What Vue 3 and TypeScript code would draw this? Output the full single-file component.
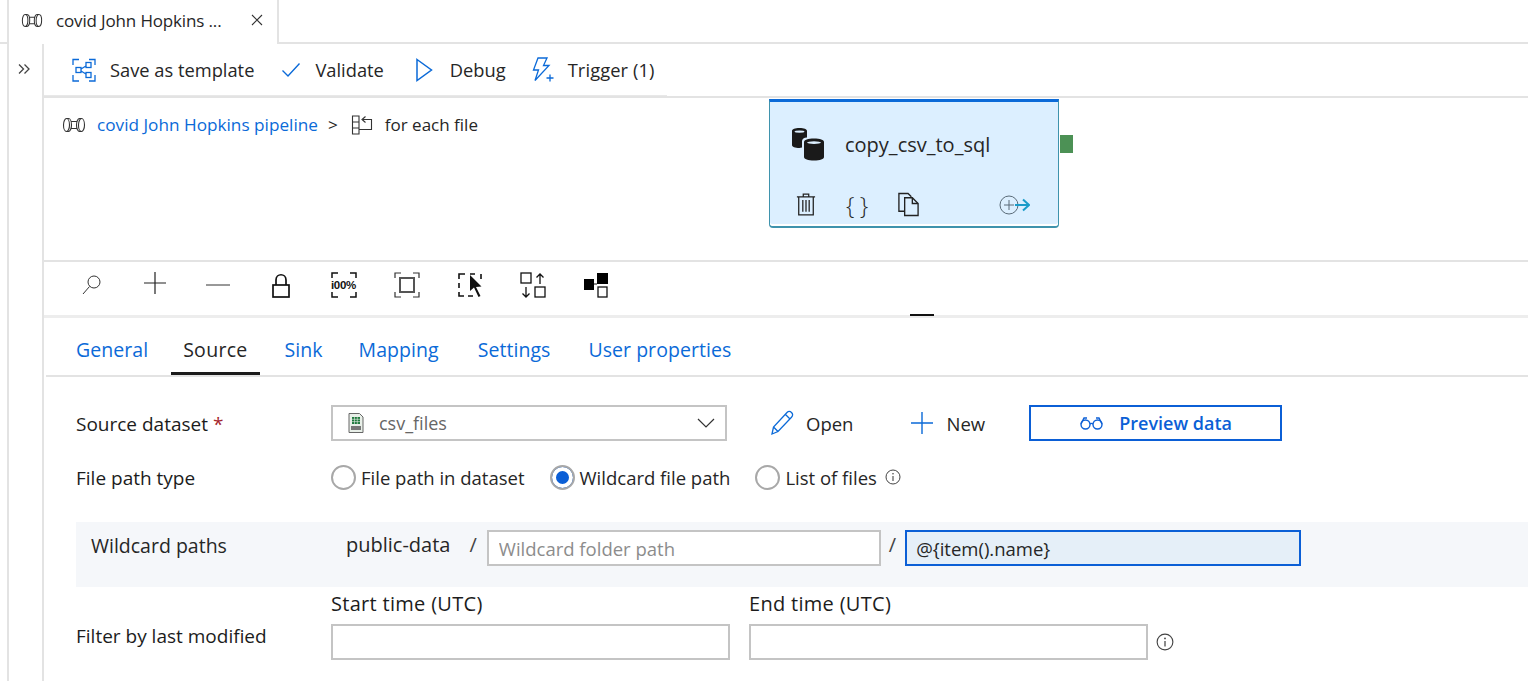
<template>
  <div class="page">
    <svg width="0" height="0" class="defs">
      <symbol id="pipe" viewBox="0 0 24 16">
        <ellipse cx="4.500" cy="8" rx="3" ry="6.500" fill="none" stroke="#333" stroke-width="1.100" />
        <ellipse cx="19.500" cy="8" rx="3" ry="6.500" fill="none" stroke="#333" stroke-width="1.100" />
        <path d="M4.500 1.500h2c1.700 0 3 3 3 6.500s-1.300 6.500-3 6.500h-2M19.500 1.500h-2c-1.700 0-3 3-3 6.500s1.300 6.500 3 6.500h2M9.500 4.500h5M9.500 11.500h5" fill="none" stroke="#333" stroke-width="1.100" />
      </symbol>
      <symbol id="info" viewBox="0 0 16 16">
        <circle cx="8" cy="8" r="7" fill="none" stroke="#444" />
        <path d="M8 7v5" stroke="#444" stroke-width="1.100" />
        <circle cx="8" cy="4.800" r=".8" fill="#444" />
      </symbol>
    </svg>

    <div class="tabstrip">
      <div class="tab">
        <svg width="22" height="15" viewBox="0 0 24 16"><use href="#pipe" /></svg>
        <span class="tab-title">covid John Hopkins ...</span>
        <svg class="tab-close" width="14" height="14" viewBox="0 0 14 14"><path d="M2 2l10 10M12 2L2 12" stroke="#333" fill="none" stroke-width="1.100" /></svg>
      </div>
    </div>

    <div class="body">
      <aside class="rail">
        <svg width="14" height="12" viewBox="0 0 14 12"><path d="M2 1.500L6.500 6 2 10.500M7.500 1.500L12 6l-4.500 4.500" fill="none" stroke="#444" stroke-width="1.300" /></svg>
      </aside>

      <main class="main">
        <div class="toolbar">
          <button class="tool save">
            <svg width="24" height="24" viewBox="0 0 24 24" fill="none" stroke="#0b6ad8" stroke-width="1.300">
              <path d="M1 7V1.500h6M17 1.500h6V7M23 17v6h-6M7 23H1v-6" />
              <rect x="14" y="4.500" width="5" height="5" />
              <rect x="14" y="14.500" width="5" height="5" />
              <rect x="4" y="9.500" width="5" height="5" />
              <path d="M9 11l5-3M9 13l5 3" />
            </svg>
            <span>Save as template</span>
          </button>
          <button class="tool validate">
            <svg width="20" height="16" viewBox="0 0 20 16"><path d="M1.500 8.500L7 14 18.500 1.500" fill="none" stroke="#0b6ad8" stroke-width="1.400" /></svg>
            <span>Validate</span>
          </button>
          <button class="tool debug">
            <svg width="18" height="24" viewBox="0 0 18 24"><path d="M2 1.500L16.500 12 2 22.500z" fill="none" stroke="#0b6ad8" stroke-width="1.500" /></svg>
            <span>Debug</span>
          </button>
          <button class="tool trigger">
            <svg width="23" height="26" viewBox="0 0 23 26" fill="none" stroke="#0b6ad8" stroke-width="1.300">
              <path d="M6 1h9l-3.500 7.500H17L3 23.500 6.500 13H1.500z" />
              <path d="M18 17.500v7M14.500 21h7" />
            </svg>
            <span>Trigger (1)</span>
          </button>
        </div>

        <section class="canvas">
          <div class="crumbs">
            <svg width="24" height="16" viewBox="0 0 24 16"><use href="#pipe" /></svg>
            <a class="link">covid John Hopkins pipeline</a>
            <span class="sep">&gt;</span>
            <svg width="22" height="20" viewBox="0 0 22 20" fill="none" stroke="#333" stroke-width="1.100">
              <path d="M1.500 1h6.500v18H1.500zM1.500 7h6.500M1.500 13h6.500" />
              <path d="M12 4.500h8.500V14.500H8" />
              <path d="M14.500 1.500L11 4.500l3.500 3" />
            </svg>
            <span class="crumb-last">for each file</span>
          </div>

          <div class="activity">
            <div class="activity-head">
              <svg width="34" height="34" viewBox="0 0 34 34" fill="#1a1a1a">
                <path d="M1 4c0-2 3-3 7.500-3S16 2 16 4v6.500c-3 .2-5 1.500-5 3.500v6.500c-1 .3-1.700.5-2.500.5C4 21 1 20 1 18z" />
                <path d="M13 15c0-2 4-3.500 10-3.500S33 13 33 15v15c0 2-4 3.500-10 3.500S13 32 13 30z" />
                <ellipse cx="23" cy="15.600" rx="7" ry="1.300" fill="#dcefff" />
                <ellipse cx="8.500" cy="4.600" rx="5" ry="1.200" fill="#dcefff" />
              </svg>
              <span class="activity-name">copy_csv_to_sql</span>
            </div>
            <div class="activity-actions">
              <svg width="20" height="25" viewBox="0 0 22 26" fill="none" stroke="#222" stroke-width="1.400">
                <path d="M1 4.500h20M8 4.500V1.500h6v3M3 4.500v20h16v-20M7.500 8v13M11 8v13M14.500 8v13" />
              </svg>
              <span class="braces">{ }</span>
              <svg class="copy" width="23" height="25" viewBox="0 0 24 26" fill="none" stroke="#222" stroke-width="1.400">
                <path d="M8 20H2V1.500h9.500L15 5" />
                <path d="M8 6h8l6 6v12.500H8z" />
                <path d="M16 6v6h6" />
              </svg>
              <svg class="add-next" width="31" height="20" viewBox="0 0 31 20" fill="none">
                <circle cx="10" cy="10" r="9" stroke="#5a6b78" stroke-width="1" />
                <path d="M5 10h10M10 5v10" stroke="#5a6b78" stroke-width="1" />
                <path d="M16 10h14M24 4.500L30 10l-6 5.500" stroke="#1a9cc9" stroke-width="2" />
              </svg>
            </div>
          </div>
          <div class="port"></div>
        </section>

        <div class="zoombar">
          <svg width="22" height="22" viewBox="0 0 22 22" fill="none" stroke="#333" stroke-width="1"><circle cx="13" cy="8" r="6" /><path d="M8.500 12.500L2 20" /></svg>
          <svg class="z-plus" width="24" height="24" viewBox="0 0 24 24" stroke="#222" stroke-width="1.200"><path d="M1 12h22M12 1v22" /></svg>
          <svg width="24" height="4" viewBox="0 0 24 4" stroke="#333" stroke-width="1"><path d="M0 2h24" /></svg>
          <svg width="18" height="25" viewBox="0 0 18 25" fill="none" stroke="#111" stroke-width="1.700"><rect x="1" y="12" width="16" height="12" /><path d="M4 12V7c0-7 10-7 10 0v5" /></svg>
          <div class="hundred">
            <svg width="26" height="26" viewBox="0 0 26 26" fill="none" stroke="#111" stroke-width="1.500"><path d="M1 6V1h6M19 1h6v5M25 20v5h-6M7 25H1v-5" /></svg>
            <span>i00%</span>
          </div>
          <svg width="26" height="26" viewBox="0 0 26 26" fill="none" stroke="#333"><path d="M1 6V1h6M19 1h6v5M25 20v5h-6M7 25H1v-5" stroke-width="1.200" /><rect x="6" y="6" width="14" height="14" stroke="#555" stroke-width="2" /></svg>
          <svg width="26" height="26" viewBox="0 0 26 26" fill="none"><path d="M2 7V2h6M13 2h5M2 11v5M2 20v4h5M11 24h5M24 2v5" stroke="#111" stroke-width="1.600" /><path d="M13 3v16l4-3.500 4.500 9.500 2-1-4.500-9 5.500-.5z" fill="#111" /></svg>
          <svg width="26" height="26" viewBox="0 0 26 26" fill="none" stroke="#111" stroke-width="1.300"><rect x="1" y="1" width="10" height="10" /><rect x="15" y="15" width="10" height="10" /><path d="M20 12V2M16.500 5.500L20 2l3.500 3.500M6 15v10M2.500 21.500L6 25l3.500-3.500" /></svg>
          <svg width="26" height="26" viewBox="0 0 26 26"><rect x="1" y="7" width="10" height="11" fill="#000" /><rect x="14" y="1" width="11" height="11" fill="#000" /><rect x="15" y="15" width="9" height="10" fill="none" stroke="#111" stroke-width="1.300" /><path d="M11 12h3" stroke="#111" /></svg>
        </div>

        <div class="splitter"><span class="grip"></span></div>

        <nav class="tabs">
          <a v-for="t in tabs" :key="t" class="tabs-item" :class="{ active: t === 'Source' }">{{ t }}</a>
        </nav>

        <form class="form" @submit.prevent>
          <div class="row row-dataset">
            <label class="label">Source dataset <em>*</em></label>
            <div class="select">
              <svg width="16" height="20" viewBox="0 0 16 20">
                <path d="M1 .5h10.500L15 4v15.500H1z" fill="#e8efe8" stroke="#666" />
                <rect x="4" y="4" width="8" height="7" fill="#1f7a3d" />
                <path d="M6.500 4v7M9.300 4v7M4 6.300h8M4 8.600h8" stroke="#e8efe8" stroke-width=".6" />
                <rect x="3" y="13" width="10" height="4" fill="#777" />
              </svg>
              <span class="select-value">csv_files</span>
              <svg class="chev" width="18" height="10" viewBox="0 0 18 10"><path d="M1 1l8 8 8-8" fill="none" stroke="#333" stroke-width="1.200" /></svg>
            </div>
            <button type="button" class="act open">
              <svg width="24" height="26" viewBox="0 0 24 26" fill="none" stroke="#0b6ad8" stroke-width="1.300"><path d="M2 24l1.500-7L17 2.500c1.500-1.500 3-1.500 4.500 0s1.500 3.200 0 4.700L8 21.500zM3.500 17L8 21.500M15.500 4.500l4 4" /></svg>
              <span>Open</span>
            </button>
            <button type="button" class="act new">
              <svg width="24" height="24" viewBox="0 0 24 24" stroke="#0b6ad8" stroke-width="1.400"><path d="M1 12h22M12 1v22" /></svg>
              <span>New</span>
            </button>
            <button type="button" class="preview">
              <svg width="25" height="14" viewBox="0 0 25 14" fill="none" stroke="#0b5fd6" stroke-width="1.400"><circle cx="6.500" cy="8.500" r="4.500" /><circle cx="18.500" cy="8.500" r="4.500" /><path d="M11 8c1-.8 2-.8 3 0M2 8L5 2h3M23 8L20 2h-3" /></svg>
              <span>Preview data</span>
            </button>
          </div>

          <div class="row row-type">
            <label class="label">File path type</label>
            <div class="radios">
              <span class="radio"><i class="dot"></i>File path in dataset</span>
              <span class="radio"><i class="dot on"></i>Wildcard file path</span>
              <span class="radio"><i class="dot"></i>List of files
                <svg class="info" width="16" height="16" viewBox="0 0 16 16"><use href="#info" /></svg>
              </span>
            </div>
          </div>

          <div class="wild">
            <span class="wild-label">Wildcard paths</span>
            <span class="wild-bucket">public-data</span>
            <span class="slash s1">/</span>
            <input class="input folder" placeholder="Wildcard folder path" />
            <span class="slash s2">/</span>
            <input class="input file" value="@{item().name}" />
          </div>

          <div class="row-filter">
            <label class="label filter-label">Filter by last modified</label>
            <div class="time">
              <label>Start time (UTC)</label>
              <input class="input date" />
            </div>
            <div class="time">
              <label>End time (UTC)</label>
              <input class="input date" />
            </div>
            <svg class="info info-end" width="18" height="18" viewBox="0 0 16 16"><use href="#info" /></svg>
          </div>
        </form>
      </main>
    </div>
  </div>
</template>

<script setup lang="ts">
const tabs: string[] = ['General', 'Source', 'Sink', 'Mapping', 'Settings', 'User properties']
</script>

<style>
html,
body {
  margin: 0;
  background: #fff;
  overflow: hidden;
}
</style>

<style scoped>
.page {
  width: 1528px;
  height: 681px;
  overflow: hidden;
  font-family: "Open Sans", "Noto Sans", sans-serif;
  font-size: 18.3px;
  color: #262626;
  background: #fff;
}

.defs {
  position: absolute;
}

.tabstrip {
  height: 42px;
  padding-left: 7px;
  border-bottom: 2px solid #e3e3e3;
  display: flex;
}

.tab {
  width: 272px;
  height: 44px;
  box-sizing: border-box;
  border-left: 2px solid #e3e3e3;
  border-right: 2px solid #e3e3e3;
  background: #fff;
  display: flex;
  align-items: center;
  padding: 0 0 4px 12px;
}

.tab-title {
  margin-left: 13px;
  font-size: 17px;
  letter-spacing: -0.15px;
  white-space: nowrap;
}

.tab-close {
  margin-left: 29px;
}

.body {
  display: flex;
  margin-left: 7px;
  height: 637px;
  border-left: 2px solid #e3e3e3;
}

.rail {
  width: 35px;
  border-right: 2px solid #e3e3e3;
  display: flex;
  justify-content: center;
  padding: 19px 4px 0 0;
  box-sizing: border-box;
  flex: none;
  align-items: flex-start;
}

.main {
  flex: 1;
  min-width: 0;
  position: relative;
}

.toolbar {
  height: 52px;
  display: flex;
  align-items: center;
  padding-left: 28px;
  box-sizing: border-box;
  width: 623px;
  border-bottom: 1px solid #e8e8e8;
}

.tool {
  border: 0;
  background: none;
  padding: 0;
  font: inherit;
  color: inherit;
  display: flex;
  align-items: center;
}

.save span { margin-left: 14px; }
.validate { margin-left: 27px; }
.validate span { margin-left: 14px; }
.debug { margin-left: 31px; }
.debug span { margin-left: 17px; }
.trigger { margin-left: 26px; }
.trigger span { margin-left: 13px; letter-spacing: 0.1px; }

.canvas {
  height: 162px;
  border-top: 2px solid #e3e3e3;
  border-bottom: 2px solid #e3e3e3;
  position: relative;
}

.crumbs {
  display: flex;
  align-items: center;
  padding: 15px 0 0 18px;
  font-size: 17.2px;
}

.link {
  color: #0b6ad8;
  margin-left: 11px;
}

.sep {
  margin: 0 13px 0 10px;
}

.crumb-last {
  margin-left: 12px;
  font-size: 17px;
}

/* activity sits on the free pipeline canvas */
.activity {
  position: absolute;
  left: 725px;
  top: 1px;
  width: 290px;
  height: 129px;
  box-sizing: border-box;
  background: #dcefff;
  border: 1px solid #3f93ad;
  border-top: 3px solid #0b6ad8;
  border-bottom-width: 2px;
  border-radius: 0 0 4px 4px;
  box-shadow: inset 0 -2px 0 #fff;
}

.activity-head {
  display: flex;
  align-items: center;
  padding: 25px 0 0 21px;
}

.activity-name {
  margin-left: 20px;
  font-size: 20px;
}

.activity-actions {
  display: flex;
  align-items: center;
  margin: 31px 0 0 26px;
}

.braces {
  margin-left: 30px;
  font-size: 24px;
  font-weight: 300;
  line-height: 25px;
  width: 22px;
  letter-spacing: -0.5px;
  white-space: nowrap;
}

.copy {
  margin-left: 29px;
}

.add-next {
  margin-left: 79px;
}

.port {
  position: absolute;
  left: 1016px;
  top: 37px;
  width: 13px;
  height: 18px;
  background: #4c9155;
}

.zoombar {
  height: 53px;
  box-sizing: border-box;
  padding: 0 0 7px 16px;
  display: grid;
  grid-template-columns: repeat(9, 63.1px);
  justify-items: center;
  align-items: center;
}

.z-plus {
  margin-bottom: 4px;
}

.hundred {
  position: relative;
  width: 26px;
  height: 26px;
}

.hundred span {
  position: absolute;
  left: 0;
  top: 5px;
  font-family: "Liberation Sans", sans-serif;
  font-size: 11.500px;
  line-height: 16px;
  font-weight: 700;
  letter-spacing: -0.3px;
  color: #111;
}

.splitter {
  height: 3px;
  background: #ededed;
  position: relative;
}

.grip {
  position: absolute;
  left: 866px;
  top: -1px;
  width: 24px;
  height: 2px;
  background: #111;
}

.tabs {
  height: 57px;
  margin-left: 2px;
  border-bottom: 2px solid #e3e3e3;
  display: flex;
  padding-left: 18px;
  font-size: 19.5px;
  letter-spacing: 0.05px;
}

.tabs-item {
  color: #0b6ad8;
  padding: 18px 12px 0;
  height: 39px;
  white-space: nowrap;
  line-height: 28px;
}

.tabs-item:nth-child(1) { margin-right: 11px; }
.tabs-item:nth-child(2) { margin-right: 13px; }
.tabs-item:nth-child(3) { margin-right: 12px; }
.tabs-item:nth-child(4) { margin-right: 15px; }
.tabs-item:nth-child(5) { margin-right: 14px; }

.tabs-item.active {
  color: #262626;
  border-bottom: 3px solid #1b1b1b;
  height: 36px;
  font-weight: 500;
  letter-spacing: 0.3px;
}

.form {
  padding-left: 32px;
}

.row {
  display: flex;
  align-items: center;
}

.label {
  width: 255px;
  flex: none;
  font-weight: 500;
  font-size: 19px;
  color: #1c1c1c;
}

.row .label {
  padding-top: 2px;
}

.label em {
  color: #a4262c;
  font-style: normal;
}

.row-dataset {
  margin-top: 28px;
  height: 36px;
}

.select {
  width: 396px;
  height: 36px;
  box-sizing: border-box;
  border: 2px solid #c4c4c4;
  display: flex;
  align-items: center;
  padding-left: 15px;
  font-size: 18px;
  color: #666;
}

.select-value {
  margin-left: 15px;
}

.chev {
  margin-left: auto;
  margin-right: 10px;
}

.act {
  border: 0;
  background: none;
  padding: 0;
  font: inherit;
  color: inherit;
  display: flex;
  align-items: center;
  font-size: 18.5px;
}

.open {
  margin-left: 43px;
}

.open span {
  margin-left: 12px;
}

.new {
  margin-left: 57px;
}

.new span {
  margin-left: 12px;
}

.preview {
  margin-left: 44px;
  width: 253px;
  height: 36px;
  box-sizing: border-box;
  border: 2px solid #0b5fd6;
  background: #fff;
  color: #0b5fd6;
  font: inherit;
  font-size: 18px;
  font-weight: 600;
  display: flex;
  align-items: center;
  justify-content: center;
  gap: 15px;
}

.row-type {
  margin-top: 18px;
  height: 36px;
}

.radios {
  display: flex;
  align-items: center;
  gap: 25px;
  font-size: 18.5px;
}

.radio {
  display: flex;
  align-items: center;
  white-space: nowrap;
}

.dot {
  width: 25px;
  height: 25px;
  box-sizing: border-box;
  border: 2px solid #a8a8a8;
  border-radius: 50%;
  margin-right: 5px;
  flex: none;
  background: #fff;
}

.dot.on {
  background: #0b5fd6;
  box-shadow: inset 0 0 0 4px #fff;
}

.info {
  margin-left: 8px;
}

.wild {
  height: 65px;
  margin-top: 27px;
  background: #f5f7fa;
  display: flex;
  align-items: flex-start;
  padding-left: 15px;
  font-size: 19.5px;
}

.wild-label {
  width: 255px;
  flex: none;
  margin-top: 10px;
}

.wild-bucket {
  margin-top: 9px;
  white-space: nowrap;
  font-size: 20px;
}

.slash {
  margin-top: 9px;
  font-size: 20px;
  color: #444;
}

.s1 { margin-left: 19px; }
.s2 { margin: 9px 9px 0 8px; }

.input {
  box-sizing: border-box;
  height: 36px;
  border: 2px solid #c4c4c4;
  background: #fff;
  font: inherit;
  font-size: 18.5px;
  padding: 0 10px;
  outline: none;
  color: #262626;
}

.input::placeholder {
  color: #8c8c8c;
  opacity: 1;
}

.folder {
  width: 394px;
  margin: 8px 0 0 10px;
}

.file {
  width: 396px;
  margin-top: 8px;
  padding: 0 9px;
  background: #e5eff8;
  border-color: #0b5fd6;
}

.row-filter {
  display: flex;
  align-items: flex-end;
  margin-top: 3px;
}

.filter-label {
  padding-bottom: 11px;
}

.time {
  display: flex;
  flex-direction: column;
  margin-right: 19px;
  font-size: 20px;
  font-weight: 500;
  letter-spacing: 0.3px;
  color: #1c1c1c;
}

.time label {
  line-height: 27px;
  margin-bottom: 7px;
}

.date {
  width: 399px;
}

.info-end {
  margin: 0 0 9px -11px;
}
</style>
